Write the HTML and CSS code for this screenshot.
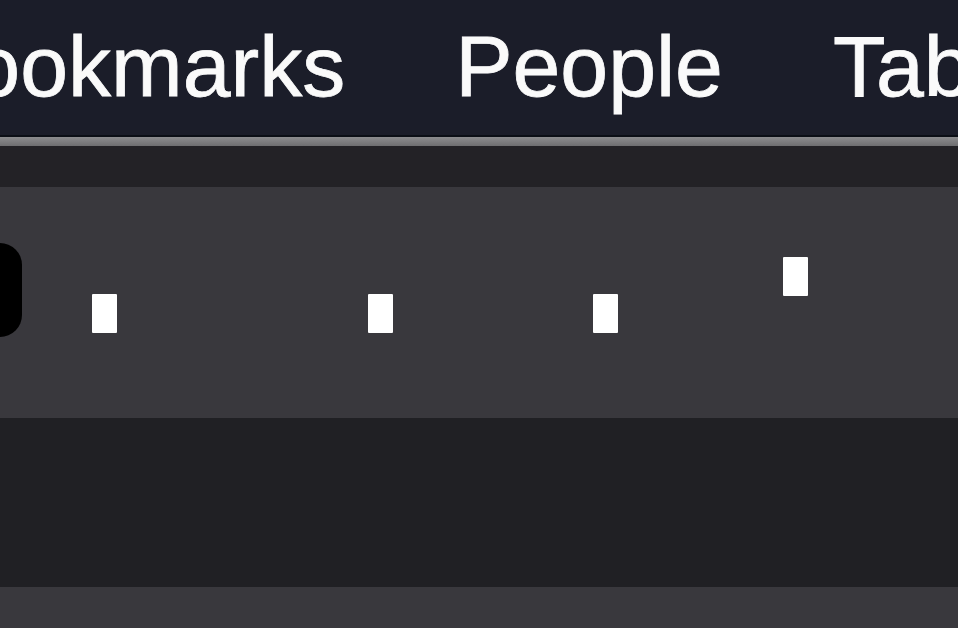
FILE: index.html
```html
<!DOCTYPE html>
<html lang="en">
<head>
    <meta charset="UTF-8">
    <meta name="viewport" content="width=device-width, initial-scale=1.0">
    <title>Menu bar</title>
    <link rel="stylesheet" href="styles.css">
</head>
<body>

<header class="menubar">
    <nav class="menu">
        <span class="menu-item">Bookmarks</span>
        <span class="menu-item">People</span>
        <span class="menu-item">Tab</span>
    </nav>
</header>

<div class="rule"></div>
<div class="strip"></div>

<div class="shelf">
    <div class="knob"></div>
    <div class="pip pip-a"></div>
    <div class="pip pip-b"></div>
    <div class="pip pip-c"></div>
    <div class="pip pip-d"></div>
</div>

<div class="well"></div>
<div class="shelf shelf-low"></div>

</body>
</html>
```

FILE: styles.css
```css
body {
    margin: 0;
    padding: 0;
    background-color: #39383d;
    overflow: hidden;
    font-family: 'Liberation Sans', Arial, sans-serif;
}
.menubar {
    height: 135px;
    background: #1b1d29;
    border-bottom: 2px solid #0c0f16;
    overflow: hidden;
}
.menu {
    display: flex;
    gap: 110px;
    margin-left: -85px;
    padding-top: 17px;
    white-space: nowrap;
}
.menu-item {
    color: #fafafa;
    font-size: 86px;
    line-height: normal;
    -webkit-text-stroke: 0.8px #fafafa;
}
.rule {
    height: 9px;
    background: linear-gradient(#8d8d8f, #6e6e70);
}
.strip {
    height: 41px;
    background: #232226;
}
.shelf {
    height: 231px;
    background: #39383d;
    display: flex;
    align-items: flex-start;
    padding-top: 56px;
    box-sizing: border-box;
}
.shelf-low {
    height: 41px;
    padding-top: 0;
}
.knob {
    width: 60px;
    height: 94px;
    margin-left: -38px;
    background: #000;
    border-radius: 22px;
}
.pip {
    width: 25px;
    height: 39px;
    background: #fff;
    border-radius: 1px;
    margin-top: 51px;
}
.pip-a { margin-left: 70px; }
.pip-b { margin-left: 251px; }
.pip-c { margin-left: 200px; }
.pip-d { margin-left: 165px; margin-top: 14px; }
.well {
    height: 169px;
    background: #202024;
}
```
